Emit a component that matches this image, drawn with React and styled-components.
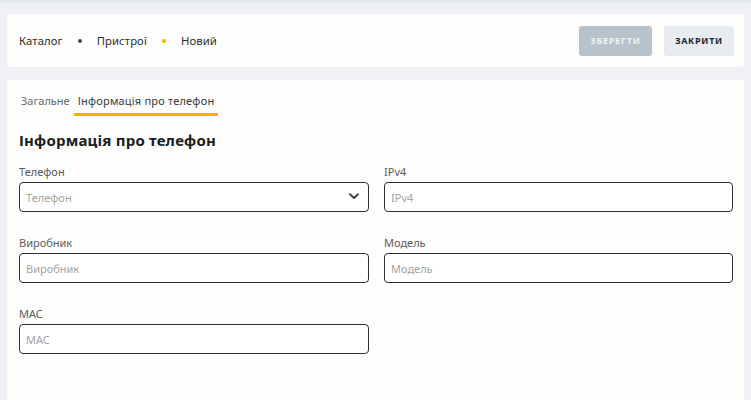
import React from "react";
import styled, { createGlobalStyle } from "styled-components";

const Global = createGlobalStyle`
  html, body { margin: 0; padding: 0; }
  body {
    background: #eff1f5;
    font-family: "Noto Sans", "Open Sans", sans-serif;
    color: #222;
  }
  * { box-sizing: border-box; }
`;

const Page = styled.div`
  min-height: 400px;
  border-top: 3px solid #e6e9ef;
  padding: 11px 7px 0 7px;
  display: flex;
  flex-direction: column;
  gap: 13px;
`;

const Card = styled.div`
  background: #fdfdfc;
  border-radius: 3px;
`;

const Header = styled(Card)`
  height: 53px;
  display: flex;
  align-items: center;
  justify-content: space-between;
  padding: 0 10px 0 12px;
`;

const Crumbs = styled.nav`
  display: flex;
  align-items: center;
  font-size: 11.3px;
  color: #2e2e2e;
`;

const Crumb = styled.span`
  letter-spacing: 0.1px;
`;

const Dot = styled.span`
  width: 4px;
  height: 4px;
  border-radius: 50%;
  background: ${(p) => (p.$active ? "#f4b400" : "#3c4450")};
  margin: 0 15px;
`;

const Actions = styled.div`
  display: flex;
  gap: 12px;
`;

const Button = styled.button`
  height: 30px;
  padding: 0;
  width: ${(p) => p.$w}px;
  border: none;
  border-radius: 3px;
  font-family: "Noto Sans", sans-serif;
  font-size: 9px;
  font-weight: 700;
  letter-spacing: 0.7px;
  background: ${(p) => (p.$primary ? "#b7c2ca" : "#e8ecf0")};
  color: ${(p) => (p.$primary ? "#eef2f5" : "#1d2731")};
`;

const Body = styled(Card)`
  flex: 1;
  min-height: 320px;
  padding: 12px 12px 0 12px;
`;

const Tabs = styled.div`
  display: flex;
  gap: 0;
  padding-left: 1px;
`;

const Tab = styled.div`
  font-size: 11px;
  letter-spacing: ${(p) => (p.$active ? "0.2px" : "0")};
  padding: 1px 4px 5px 4px;
  color: ${(p) => (p.$active ? "#3a3a3a" : "#6a6a6a")};
  border-bottom: 3px solid ${(p) => (p.$active ? "#f6b200" : "transparent")};
  margin-left: ${(p) => (p.$first ? "-3px" : "0")};
`;

const Title = styled.h2`
  margin: 14px 0 0 0;
  font-size: 15px;
  font-weight: 700;
  color: #1c1c1c;
  letter-spacing: 0.2px;
`;

const Grid = styled.div`
  margin-top: 15px;
  display: grid;
  grid-template-columns: 350px 349px;
  column-gap: 15px;
  row-gap: 24px;
`;

const Field = styled.label`
  display: flex;
  flex-direction: column;
  gap: 4px;
`;

const Label = styled.span`
  font-size: 11px;
  color: #5c5c5c;
  line-height: 13px;
`;

const InputWrap = styled.div`
  position: relative;
  height: 30px;
`;

const Input = styled.input`
  width: 100%;
  height: 30px;
  border: 1px solid #2f2f2f;
  border-radius: 4px;
  background: #fff;
  padding: 0 6px;
  font-family: "Noto Sans", sans-serif;
  font-size: 11px;
  color: #333;
  outline: none;
  &::placeholder { color: #a3a3a3; }
`;

const Chevron = styled.svg`
  position: absolute;
  right: 10px;
  top: 11px;
  pointer-events: none;
`;

const fields = [
  { label: "Телефон", select: true },
  { label: "IPv4" },
  { label: "Виробник" },
  { label: "Модель" },
  { label: "MAC" },
];

export default function App() {
  return (
    <>
      <Global />
      <Page>
        <Header>
          <Crumbs>
            <Crumb>Каталог</Crumb>
            <Dot />
            <Crumb>Пристрої</Crumb>
            <Dot $active />
            <Crumb>Новий</Crumb>
          </Crumbs>
          <Actions>
            <Button $primary $w={73}>ЗБЕРЕГТИ</Button>
            <Button $w={70}>ЗАКРИТИ</Button>
          </Actions>
        </Header>
        <Body>
          <Tabs>
            <Tab $first>Загальне</Tab>
            <Tab $active>Інформація про телефон</Tab>
          </Tabs>
          <Title>Інформація про телефон</Title>
          <Grid>
            {fields.map((f) => (
              <Field key={f.label}>
                <Label>{f.label}</Label>
                <InputWrap>
                  <Input placeholder={f.label} readOnly={f.select} />
                  {f.select && (
                    <Chevron width="10" height="7" viewBox="0 0 10 7">
                      <path d="M1 1.2 L5 5 L9 1.2" fill="none" stroke="#3c4450" strokeWidth="2" strokeLinecap="round" strokeLinejoin="round" />
                    </Chevron>
                  )}
                </InputWrap>
              </Field>
            ))}
          </Grid>
        </Body>
      </Page>
    </>
  );
}
